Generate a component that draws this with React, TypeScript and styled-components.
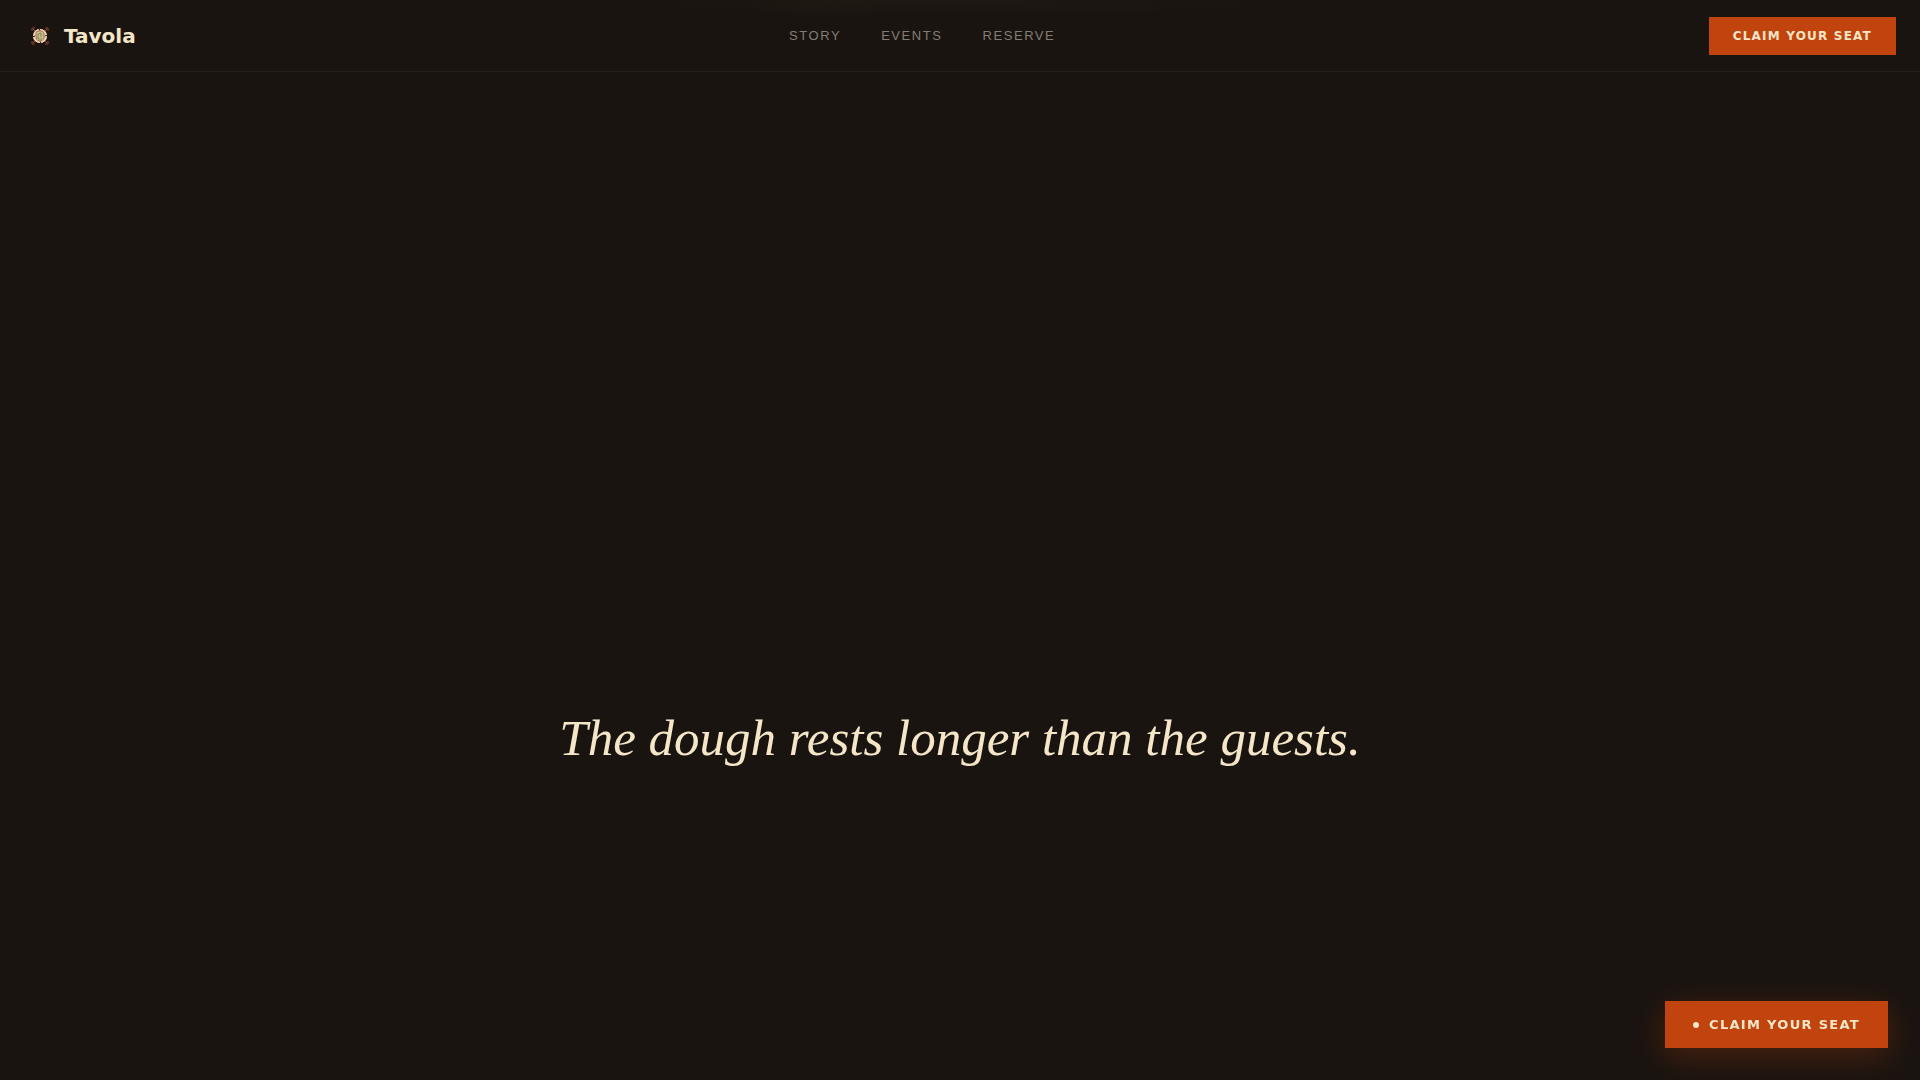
import React from "react";
import styled, { createGlobalStyle } from "styled-components";

const GlobalStyle = createGlobalStyle`
  *, *::before, *::after { box-sizing: border-box; }
  body { margin: 0; background: #1a1410; color: #f5e6c8; font-family: "DejaVu Sans", sans-serif; }
`;

const Page = styled.div`
  display: flex;
  flex-direction: column;
  min-height: 100vh;
`;

const Header = styled.header`
  display: flex;
  align-items: center;
  justify-content: space-between;
  height: 72px;
  padding: 0 24px;
  border-bottom: 1px solid #24201b;
  background:
    radial-gradient(ellipse 80px 18px at 43% 0, rgba(36, 29, 18, 0.4), transparent),
    radial-gradient(ellipse 340px 18px at 50% 0, #1d1812, #1a1410);
`;

const Brand = styled.a`
  display: flex;
  align-items: center;
  gap: 8px;
  color: inherit;
  font-size: 20px;
  font-weight: 700;
  line-height: 24px;
  text-decoration: none;
`;

const Mark = styled.svg`
  width: 32px;
  height: 32px;
`;

const Nav = styled.nav`
  display: flex;
  gap: 40px;
`;

const NavLink = styled.a`
  color: #837d74;
  font-family: "Liberation Sans", Arial, sans-serif;
  font-size: 13px;
  line-height: 16px;
  letter-spacing: 0.12em;
  text-decoration: none;
  text-transform: uppercase;
`;

const Button = styled.button`
  border: 0;
  border-radius: 0;
  background: #c1440e;
  color: #f5e6c8;
  font-family: inherit;
  font-weight: 700;
  letter-spacing: 0.1em;
  text-transform: uppercase;
  cursor: pointer;
`;

const HeaderButton = styled(Button)`
  padding: 12px 24px;
  font-size: 12px;
  line-height: 14px;
`;

const FloatingButton = styled(Button)`
  position: fixed;
  right: 32px;
  bottom: 32px;
  display: flex;
  align-items: center;
  gap: 10px;
  padding: 16px 28px;
  font-size: 13px;
  line-height: 15px;
  box-shadow: 0 8px 32px rgba(193, 68, 14, 0.3);
`;

const Dot = styled.span`
  width: 6px;
  height: 6px;
  border-radius: 50%;
  background: #f5e6c8;
`;

const Story = styled.main`
  flex: 1;
  display: flex;
  flex-direction: column;
  align-items: center;
  justify-content: flex-end;
  padding: 0 24px 309px;
`;

const Line = styled.p`
  margin: 0;
  font-family: "Liberation Serif", "Times New Roman", serif;
  font-size: 51px;
  font-style: italic;
  line-height: 66px;
  text-align: center;
`;

function Logo() {
  return (
    <Mark viewBox="0 0 32 32" aria-hidden="true">
      <path d="M8 11V8h3M21 8h3v3M8 21v3h3M21 24h3v-3" fill="none" stroke="#94412d" strokeWidth="1" />
      <path d="M9 9l2 2M23 9l-2 2M9 23l2-2M23 23l-2-2" stroke="#a34a33" strokeWidth="1" />
      <circle cx="16" cy="16" r="7" fill="#d9b896" />
      <circle cx="16" cy="16" r="6" fill="none" stroke="#ecd3b5" strokeWidth="2" />
      <path d="M15 8l1 3M17 24l-1-3M8 17l3-1M24 15l-3 1" stroke="#33211a" strokeWidth="1" />
      <path d="M12 13q0-2 3-2h3q2 1 2 3v4q-1 3-4 3-4 0-4-4z" fill="none" stroke="#a87554" strokeWidth="1" />
      <rect x="13" y="12" width="6" height="8" rx="1" fill="#d2b985" />
      <path d="M14 19v-5l3-1v4M14 19h4" fill="none" stroke="#6c925e" strokeWidth="1" />
    </Mark>
  );
}

export default function App() {
  return (
    <Page>
      <GlobalStyle />
      <Header>
        <Brand href="#top">
          <Logo />
          Tavola
        </Brand>
        <Nav aria-label="Main">
          <NavLink href="#story">Story</NavLink>
          <NavLink href="#events">Events</NavLink>
          <NavLink href="#reserve">Reserve</NavLink>
        </Nav>
        <HeaderButton type="button">Claim your seat</HeaderButton>
      </Header>
      <Story id="story">
        <Line>The dough rests longer than the guests.</Line>
      </Story>
      <FloatingButton type="button">
        <Dot />
        Claim your seat
      </FloatingButton>
    </Page>
  );
}
